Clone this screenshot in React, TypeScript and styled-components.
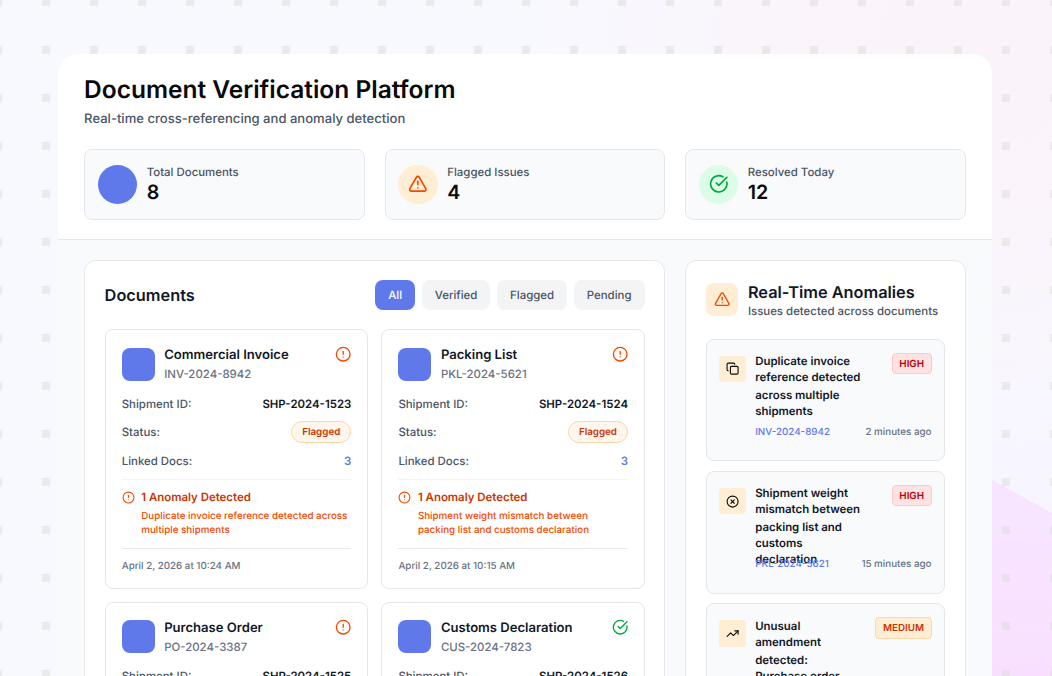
import React from "react";
import styled, { createGlobalStyle } from "styled-components";
import { AlertTriangle, AlertCircle, CircleCheckBig, Copy, CircleX, TrendingUp } from "lucide-react";

const Global = createGlobalStyle`
  * { box-sizing: border-box; }
  body { margin: 0; overflow: hidden; font-family: Inter, "Liberation Sans", sans-serif; font-weight: 450; text-rendering: geometricPrecision; }
  h1, h2, h3, p { margin: 0; }
  svg { display: block; flex: none; }
`;

const Page = styled.main`
  position: relative;
  height: 676px;
  overflow: hidden;
  padding: 54px 60px 0 58px;
  background:
    radial-gradient(circle 440px at 970px 60px, #fbf3fa 0, rgba(251, 243, 250, 0.85) 40%, rgba(251, 243, 250, 0) 100%),
    #f8f9ff;
`;
const Backdrop = styled.svg`
  position: absolute;
  inset: 0;
`;
const Shell = styled.div`
  position: relative;
  height: 800px;
  overflow: hidden;
  border-radius: 20px 20px 0 0;
  background: #f8fafc;
`;
const Header = styled.header`
  height: 185.5px;
  padding: 20px 26.1px 0;
  background: #fff;
  border-bottom: 1px solid #e5e7eb;
`;
const Title = styled.h1`
  font-size: 24.5px;
  line-height: 31px;
  font-weight: 600;
  color: #0a0a0a;
`;
const Subtitle = styled.p`
  margin-top: 4px;
  font-size: 13.07px;
  line-height: 20px;
  color: #4a5565;
`;
const Stats = styled.div`
  display: grid;
  grid-template-columns: repeat(3, 1fr);
  gap: 19.8px;
  margin-top: 20px;
`;
const Stat = styled.div`
  display: flex;
  align-items: center;
  gap: 9.6px;
  height: 70.5px;
  padding: 0 12.8px;
  border: 1px solid #e5e7eb;
  border-radius: 8px;
  background: #f9fafb;
`;
const Disc = styled.div<{ $bg: string; $fg?: string }>`
  display: grid;
  place-items: center;
  width: 39.2px;
  height: 39.2px;
  border-radius: 50%;
  background: ${(p) => p.$bg};
  color: ${(p) => p.$fg};
`;
const StatLabel = styled.p`
  font-size: 11.43px;
  line-height: 17px;
  color: #4a5565;
`;
const StatValue = styled.p`
  font-size: 19.6px;
  line-height: 23px;
  font-weight: 600;
  color: #0a0a0a;
`;
const Body = styled.div`
  display: grid;
  grid-template-columns: 581px 280.5px;
  gap: 20px;
  padding: 20.5px 26.1px 0;
`;
const Panel = styled.section`
  height: 700px;
  padding: 0 19.5px;
  border: 1px solid #e5e7eb;
  border-radius: 11.5px;
  background: #fff;
`;
const DocsHead = styled.div`
  display: flex;
  align-items: center;
  justify-content: space-between;
  height: 29.5px;
  margin: 19px 0 19.8px;
`;
const Heading = styled.h2`
  font-size: 16.33px;
  line-height: 20px;
  font-weight: 600;
  color: #101828;
`;
const Filters = styled.div`
  display: flex;
  gap: 6.5px;
`;
const Filter = styled.button<{ $active?: boolean }>`
  height: 29.5px;
  padding: 0 13.1px;
  border: 0;
  border-radius: 8px;
  font: 550 11.43px/30px Inter, sans-serif;
  text-rendering: inherit;
  background: ${(p) => (p.$active ? "#5f79ea" : "#f3f4f6")};
  color: ${(p) => (p.$active ? "#fff" : "#4a5565")};
`;
const DocGrid = styled.div`
  display: grid;
  grid-template-columns: 1fr 1fr;
  gap: 13.4px;
`;
const DocCard = styled.article`
  height: 259.5px;
  padding: 17.3px 15.6px 0 16.1px;
  border: 1px solid #e5e7eb;
  border-radius: 8px;
`;
const DocTop = styled.div`
  display: flex;
  height: 33px;
`;
const Tile = styled.div`
  width: 33px;
  height: 33px;
  border-radius: 8px;
  background: #5f79ea;
`;
const DocNames = styled.div`
  flex: 1;
  margin: -1.3px 0 0 9.5px;
`;
const DocTitle = styled.h3`
  font-size: 13.07px;
  line-height: 19px;
  font-weight: 600;
  color: #101828;
`;
const DocId = styled.p`
  font-size: 11.43px;
  line-height: 19px;
  color: #6a7282;
`;
const StateIcon = styled.div<{ $ok?: boolean }>`
  margin: -1.5px 0 0;
  color: ${(p) => (p.$ok ? "#00a63e" : "#f54900")};
`;
const Rows = styled.div`
  display: flex;
  flex-direction: column;
  gap: 8.6px;
  margin-top: 13px;
`;
const Row = styled.div`
  display: flex;
  align-items: center;
  justify-content: space-between;
  height: 20px;
  font-size: 11.43px;
  color: #4a5565;
`;
const Strong = styled.span`
  font-weight: 600;
  color: #101828;
`;
const Count = styled.span`
  font-weight: 600;
  color: #5f79ea;
`;
const Pill = styled.span`
  height: 21.5px;
  padding: 0 10px;
  border: 1px solid #ffd6a8;
  border-radius: 11px;
  font-size: 9.8px;
  line-height: 21px;
  font-weight: 600;
  background: #fff7ed;
  color: #ca3500;
`;
const Alert = styled.div`
  display: flex;
  gap: 6.5px;
  height: 70px;
  margin-top: 8.1px;
  padding-top: 9.2px;
  border-top: 1px solid #f3f4f6;
  border-bottom: 1px solid #e5e7eb;
  color: #f54900;
`;
const AlertIcon = styled.div`
  margin-top: 2px;
`;
const AlertTitle = styled.p`
  font-size: 11.43px;
  line-height: 17px;
  font-weight: 600;
  color: #ca3500;
`;
const AlertText = styled.p`
  margin-top: 4px;
  font-size: 9.8px;
  line-height: 14px;
  white-space: pre-line;
`;
const Stamp = styled.p`
  margin-top: 9.8px;
  font-size: 9.8px;
  line-height: 15px;
  color: #6a7282;
`;
const AnomHead = styled.div`
  display: flex;
  gap: 9.6px;
  height: 40px;
  margin: 20px 0 17.5px;
`;
const WarnTile = styled.div`
  display: grid;
  place-items: center;
  width: 32.7px;
  height: 32.7px;
  margin-top: 2.2px;
  border-radius: 8px;
  background: #ffedd4;
  color: #f54900;
`;
const AnomSub = styled.p`
  margin-top: 0.5px;
  font-size: 11.43px;
  line-height: 18px;
  white-space: nowrap;
  color: #4a5565;
`;
const AnomText = styled.div`
  padding-top: 0.6px;
`;
const AnomCard = styled.article`
  display: grid;
  grid-template-columns: 26.5px 1fr;
  grid-template-rows: 73px 14px;
  column-gap: 9.5px;
  height: 122.7px;
  margin-bottom: 9.8px;
  padding: 13px 12.6px;
  border: 1px solid #e5e7eb;
  border-radius: 8px;
  background: #f9fafb;
`;
const SmallTile = styled.div`
  display: grid;
  place-items: center;
  width: 26.5px;
  height: 26.5px;
  margin-top: 3px;
  border-radius: 4px;
  background: #ffedd4;
  color: #0a0a0a;
`;
const AnomMain = styled.div`
  display: flex;
  justify-content: space-between;
  height: 71px;
`;
const AnomTitle = styled.h3`
  margin-top: 0.3px;
  font-size: 11.43px;
  line-height: 16.1px;
  font-weight: 600;
  white-space: pre;
  color: #101828;
`;
const TitleRest = styled.span`
  display: block;
  margin-top: 1.8px;
`;
const Badge = styled.span<{ $medium?: boolean }>`
  flex: none;
  height: 21.5px;
  padding: 0 6.5px;
  border: 1px solid ${(p) => (p.$medium ? "#ffd6a8" : "#ffc9c9")};
  border-radius: 4px;
  font-size: 9.8px;
  line-height: 21px;
  font-weight: 600;
  background: ${(p) => (p.$medium ? "#ffedd4" : "#ffe2e2")};
  color: ${(p) => (p.$medium ? "#ca3500" : "#c10007")};
`;
const AnomFoot = styled.div`
  grid-column: 2;
  display: flex;
  justify-content: space-between;
  font-size: 9.8px;
  line-height: 14px;
  color: #6a7282;
`;
const Ref = styled.span`
  color: #5f79ea;
`;

const docs = [
  { title: "Commercial Invoice", id: "INV-2024-8942", ship: "SHP-2024-1523", text: "Duplicate invoice reference detected across\nmultiple shipments", time: "April 2, 2026 at 10:24 AM" },
  { title: "Packing List", id: "PKL-2024-5621", ship: "SHP-2024-1524", text: "Shipment weight mismatch between\npacking list and customs declaration", time: "April 2, 2026 at 10:15 AM" },
  { title: "Purchase Order", id: "PO-2024-3387", ship: "SHP-2024-1525" },
  { title: "Customs Declaration", id: "CUS-2024-7823", ship: "SHP-2024-1526", ok: true },
];

const anomalies = [
  { icon: Copy, head: "Duplicate invoice\nreference detected", rest: "across multiple\nshipments", level: "HIGH", id: "INV-2024-8942", ago: "2 minutes ago" },
  { icon: CircleX, head: "Shipment weight\nmismatch between", rest: "packing list and\ncustoms\ndeclaration", level: "HIGH", id: "PKL-2024-5621", ago: "15 minutes ago" },
  { icon: TrendingUp, head: "Unusual\namendment", rest: "detected:\nPurchase order", level: "MEDIUM" },
];

export default function App() {
  return (
    <Page>
      <Global />
      <Backdrop width="1052" height="676" aria-hidden="true">
        <defs>
          <linearGradient id="blush" x1="0" y1="0" x2="0" y2="1">
            <stop offset="0" stopColor="#f7e6ff" />
            <stop offset="1" stopColor="#f9dfff" />
          </linearGradient>
          <linearGradient id="lilac" x1="0" y1="0" x2="0" y2="1">
            <stop offset="0" stopColor="#f7f5fe" stopOpacity="0" />
            <stop offset="1" stopColor="#f7f5ff" />
          </linearGradient>
          <pattern id="squares" x="42" y="-2" width="48" height="48" patternUnits="userSpaceOnUse">
            <rect width="8" height="8" fill="#dedcd7" fillOpacity="0.5" />
          </pattern>
        </defs>
        <rect x="980" y="200" width="72" height="320" fill="url(#lilac)" />
        <path d="M980 473 L1052 513 V676 H980 Z" fill="url(#blush)" />
        <rect width="1052" height="676" fill="url(#squares)" />
      </Backdrop>
      <Shell>
        <Header>
          <Title>Document Verification Platform</Title>
          <Subtitle>Real-time cross-referencing and anomaly detection</Subtitle>
          <Stats>
            <Stat>
              <Disc $bg="#5f79ea" />
              <div><StatLabel>Total Documents</StatLabel><StatValue>8</StatValue></div>
            </Stat>
            <Stat>
              <Disc $bg="#ffedd4" $fg="#f54900"><AlertTriangle size={19.6} /></Disc>
              <div><StatLabel>Flagged Issues</StatLabel><StatValue>4</StatValue></div>
            </Stat>
            <Stat>
              <Disc $bg="#dcfce7" $fg="#00a63e"><CircleCheckBig size={19.6} /></Disc>
              <div><StatLabel>Resolved Today</StatLabel><StatValue>12</StatValue></div>
            </Stat>
          </Stats>
        </Header>
        <Body>
          <Panel>
            <DocsHead>
              <Heading>Documents</Heading>
              <Filters>
                <Filter $active>All</Filter>
                <Filter>Verified</Filter>
                <Filter>Flagged</Filter>
                <Filter>Pending</Filter>
              </Filters>
            </DocsHead>
            <DocGrid>
              {docs.map((d) => (
                <DocCard key={d.id}>
                  <DocTop>
                    <Tile />
                    <DocNames>
                      <DocTitle>{d.title}</DocTitle>
                      <DocId>{d.id}</DocId>
                    </DocNames>
                    <StateIcon $ok={d.ok}>
                      {d.ok ? <CircleCheckBig size={16.4} /> : <AlertCircle size={16.4} />}
                    </StateIcon>
                  </DocTop>
                  <Rows>
                    <Row>Shipment ID:<Strong>{d.ship}</Strong></Row>
                    {d.text && <Row>Status:<Pill>Flagged</Pill></Row>}
                    {d.text && <Row>Linked Docs:<Count>3</Count></Row>}
                  </Rows>
                  {d.text && (
                    <>
                      <Alert>
                        <AlertIcon><AlertCircle size={13} /></AlertIcon>
                        <div>
                          <AlertTitle>1 Anomaly Detected</AlertTitle>
                          <AlertText>{d.text}</AlertText>
                        </div>
                      </Alert>
                      <Stamp>{d.time}</Stamp>
                    </>
                  )}
                </DocCard>
              ))}
            </DocGrid>
          </Panel>
          <Panel>
            <AnomHead>
              <WarnTile><AlertTriangle size={16.4} /></WarnTile>
              <AnomText>
                <Heading>Real-Time Anomalies</Heading>
                <AnomSub>Issues detected across documents</AnomSub>
              </AnomText>
            </AnomHead>
            {anomalies.map(({ icon: Icon, ...a }) => (
              <AnomCard key={a.head}>
                <SmallTile><Icon size={13.2} /></SmallTile>
                <AnomMain>
                  <AnomTitle>{a.head}<TitleRest>{a.rest}</TitleRest></AnomTitle>
                  <Badge $medium={a.level === "MEDIUM"}>{a.level}</Badge>
                </AnomMain>
                {a.id && <AnomFoot><Ref>{a.id}</Ref><span>{a.ago}</span></AnomFoot>}
              </AnomCard>
            ))}
          </Panel>
        </Body>
      </Shell>
    </Page>
  );
}
